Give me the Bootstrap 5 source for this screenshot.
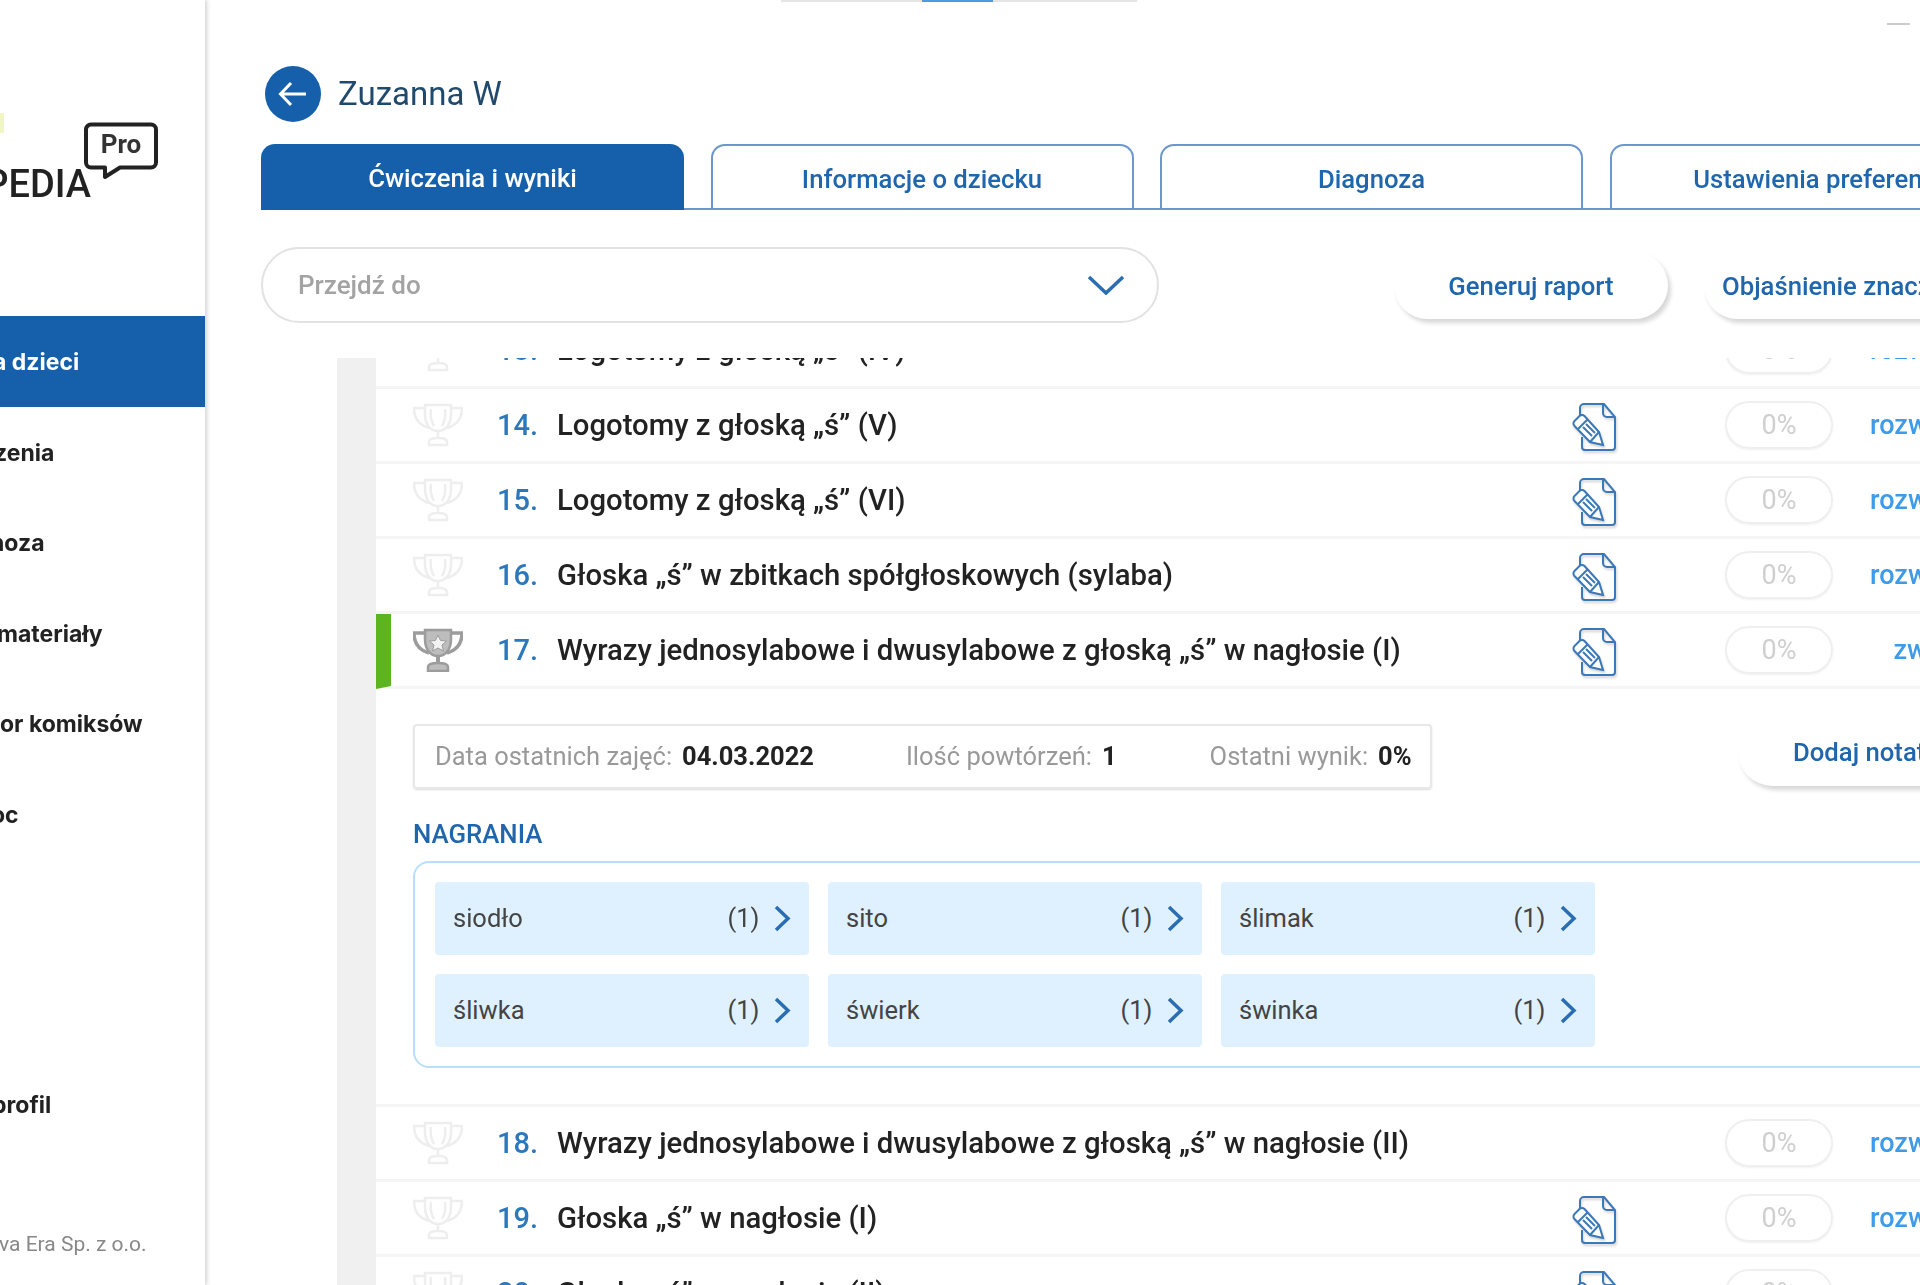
<!DOCTYPE html>
<html lang="pl">
<head>
<meta charset="utf-8">
<title>Zuzanna W</title>
<link href="https://cdn.jsdelivr.net/npm/bootstrap@5.3.0/dist/css/bootstrap.min.css" rel="stylesheet">
<style>
html,body{height:1285px;overflow:hidden;background:#fff}
body{font-family:Roboto,"Liberation Sans",sans-serif;color:#222}
.shell{height:1285px;width:1920px;overflow:hidden;filter:blur(.5px)}
.side{width:205px;flex:none;height:1285px;overflow:hidden;background:#fff;box-shadow:2px 0 4px #d4d4d4;position:relative;z-index:2}
.spark{position:absolute;left:0;top:113px;width:4px;height:20px;background:#f1f7c4}
.logo-box{height:316px;position:relative}
.logo-word{position:absolute;right:114px;top:164px;font-size:38px;line-height:40px;font-weight:500;white-space:nowrap;color:#222}
.logo-bubble{position:absolute;left:84px;top:122px;width:74px;height:58px}
.logo-pro{font:700 26px Roboto,sans-serif;fill:#333}
.navi a,.prof{font-family:Inter,Roboto,sans-serif;font-size:23px;font-weight:700;color:#222;white-space:nowrap}
.navi a{display:flex;align-items:center;height:90.500px;padding:2px 0 0 0;text-decoration:none}
.navi a.on{background:#1660ab;color:#fff}
.navi a.i1{text-indent:-7px}
.navi a.i2{text-indent:-6px}
.navi a.i3{text-indent:-10px}
.navi a.i4{text-indent:-3px}
.navi a.i6{text-indent:-9px}
.prof{margin-top:201px;height:90px;display:flex;align-items:center;text-indent:-8px}
.copy{font-size:21px;color:#888;margin-top:79px;white-space:nowrap;text-indent:-1px}
.work{width:1715px;flex:none;height:1285px;overflow:hidden}
.topbar{height:25px;padding-left:576px}
.strip{width:356px;height:2px;background:linear-gradient(90deg,#e5e5e5 0 141px,#4a9be0 141px 212px,#e5e5e5 212px)}
.dash{width:23px;height:2px;background:#ccc;margin:23px 0 0 750px}
.pane{padding-left:56px}
.head{margin-top:41px;gap:17px;height:56px;padding-left:4px}
.back{width:56px;height:56px;border-radius:50%;background:#1660ab;flex:none}
.who{font-size:33px;color:#1f4a6e;line-height:1;padding-bottom:2px}
.tabsrow{margin-top:22px;height:66px;gap:26.500px;border-bottom:2px solid #6b97cc;width:1800px}
.tabx{width:423px;flex:none;height:66px;border:2px solid #6b97cc;border-bottom:0;border-radius:14px 14px 0 0;display:flex;align-items:center;justify-content:center;padding-top:2px;font-size:25.700px;font-weight:500;color:#1f66ad;text-decoration:none;white-space:nowrap}
.tabx.on{background:#1660ab;border-color:#1660ab;color:#fff;padding-top:0}
.tools{margin-top:37px;height:76px}
.jump{width:898px;height:76px;flex:none;border:2px solid #e2e2e2;border-radius:38px;padding:0 32px 0 35px;color:#a3a3a3;font-size:26px;font-weight:500}
.pillbtn{flex:none;border-radius:40px;background:#fff;box-shadow:3px 4px 4px #d8d8d8;display:flex;align-items:center;justify-content:center;font-size:25.700px;font-weight:500;color:#1f66ad;text-decoration:none;white-space:nowrap;padding-top:2px}
.gen{width:274px;height:67px;margin-left:235px}
.expl{width:300px;height:67px;margin-left:36px;justify-content:flex-start;padding-left:18px}
.lst{margin:35px 0 0 76px;height:927px;overflow:hidden;border-left:39px solid #f0f0f0;width:1640px}
.rw{height:75px;border-bottom:3px solid #f5f5f5;padding-left:37px;align-items:center;display:flex;flex:none}
.rw.cut{margin-top:-44px}
.rw.cur{border-left:15px solid #5cb51e;padding-left:22px}
.trophy{width:50px;height:44px;flex:none;margin-right:34px}
.num{width:60px;flex:none;font-size:29px;font-weight:500;color:#2b78bd;padding-top:2px}
.ttl{width:1015px;flex:none;font-size:29.300px;font-weight:500;color:#222;white-space:nowrap;padding-top:2px}
.docc{width:153px;flex:none;display:flex;align-items:center;height:50px;margin-top:3px}
.docc svg{filter:drop-shadow(1px 2px 1px #d0d0d0)}
.pct{width:108px;height:48px;flex:none;border:2px solid #efefef;border-radius:24px;color:#cfcfcf;font-size:27px;display:flex;align-items:center;justify-content:center;box-shadow:0 1px 2px #f0f0f0}
.tog{width:79px;margin-left:37px;flex:none;text-align:right;font-size:27px;font-weight:500;color:#3d9be9;white-space:nowrap;text-decoration:none}
.more{padding:28px 0 36px 37px;border-bottom:3px solid #f5f5f5}
.infobox{width:1019px;height:65px;margin-top:7px;flex:none;border:2px solid #e8e8e8;border-radius:4px;box-shadow:0 1px 2px #ddd;padding-left:20px;font-size:25.500px;color:#999;white-space:nowrap}
.infobox b{color:#222;font-weight:700;margin-left:10px}
.infobox .it2{margin-left:92px}
.infobox .it3{margin-left:93px}
.note{width:320px;height:69px;margin-left:306px;justify-content:flex-start;padding-left:55px}
.nagr{margin-top:27px;font-size:25.800px;font-weight:500;color:#1f66ad;line-height:36px}
.recs{margin-top:9px;width:1560px;height:207px;border:2px solid #b9def8;border-radius:16px;padding:19px 20px;display:grid;grid-template-columns:repeat(3,373.500px);grid-auto-rows:73px;gap:19px 19.500px}
.tile{background:#dff1ff;border-radius:4px;padding:0 18px 0 18px;font-size:25.500px;color:#444;display:flex;align-items:center;text-decoration:none}
.tile span{margin-left:auto;margin-right:14px}
</style>
</head>
<body>
<svg width="0" height="0" style="position:absolute">
<defs>
<symbol id="cup" viewBox="0 0 50 44">
<path d="M12 2h26v9c0 10-5 17-13 17S12 21 12 11z M12 5H1c0 10 5 17 15 20 M38 5h11c0 10-5 17-15 20 M25 28v7 M16 42v-3c0-3 5-4 9-4s9 1 9 4v3z M18 6c-1 7 0 12 3 17 M32 6c1 7 0 12-3 17" fill="none"/>
</symbol>
<symbol id="cupfull" viewBox="0 0 50 44">
<path d="M12 2h26v9c0 10-5 17-13 17S12 21 12 11z" fill="#bdbdbd"/>
<path d="M12 5H1c0 10 5 17 15 20 M38 5h11c0 10-5 17-15 20" fill="none" stroke-width="3.500"/>
<path d="M25 28v7" fill="none" stroke-width="4"/>
<path d="M15 43v-4c0-3 5-4 10-4s10 1 10 4v4z" fill="#bdbdbd"/>
<path d="M25 7l2.500 5.500 6 .5-4.500 4 1.500 6-5.500-3-5.500 3 1.500-6-4.500-4 6-.5z" fill="#f2f2f2" stroke-width="1"/>
</symbol>
<symbol id="doc" viewBox="0 0 44 50">
<path d="M8 13V6a4 4 0 0 1 4-4h20l11 13v30a3 3 0 0 1-3 3H13a3 3 0 0 1-3-3V35" fill="none"/>
<path d="M31 2v9a4 4 0 0 0 4 4h8" fill="none"/>
<path d="M31 43l-13-3L2.500 24a3.500 3.500 0 0 1 0-5l5-5a3.500 3.500 0 0 1 5 0L27 30z" fill="#fff"/>
<path d="M6 27l10-10M18 40l9-10M11 25l9 9M14 22l9 9" fill="none"/>
</symbol>
</defs>
</svg>
<div class="shell d-flex">
<aside class="side">
<span class="spark"></span>
<div class="logo-box">
<div class="logo-word">LOGOPEDIA</div>
<svg class="logo-bubble" viewBox="0 0 74 58"><path d="M7 2.500h60a5 5 0 0 1 5 5v33a5 5 0 0 1-5 5H36L21 55v-9.500h-14a5 5 0 0 1-5-5V7.500a5 5 0 0 1 5-5z" fill="#fff" stroke="#222" stroke-width="4" stroke-linejoin="round"/><text x="37" y="31" text-anchor="middle" class="logo-pro">Pro</text></svg>
</div>
<nav class="navi">
<a class="on i1" href="#">a dzieci</a>
<a class="i2" href="#">zenia</a>
<a class="i3" href="#">noza</a>
<a class="i4" href="#">materiały</a>
<a href="#">or komiksów</a>
<a class="i6" href="#">oc</a>
</nav>
<div class="prof">profil</div>
<div class="copy">va Era Sp. z o.o.</div>
</aside>
<main class="work">
<div class="topbar d-flex"><div class="strip"></div><div class="dash"></div></div>
<div class="pane">
<div class="head d-flex align-items-center">
<a class="back d-flex align-items-center justify-content-center" href="#"><svg width="30" height="26" viewBox="0 0 30 26" fill="none" stroke="#fff" stroke-width="3"><path d="M28 13H3M13 2L2.500 13L13 24"/></svg></a>
<div class="who">Zuzanna W</div>
</div>
<div class="tabsrow d-flex">
<a class="tabx on" href="#">Ćwiczenia i wyniki</a>
<a class="tabx" href="#">Informacje o dziecku</a>
<a class="tabx" href="#">Diagnoza</a>
<a class="tabx" href="#">Ustawienia preferencji</a>
</div>
<div class="tools d-flex align-items-center">
<div class="jump d-flex align-items-center justify-content-between">Przejdź do
<svg width="38" height="20" viewBox="0 0 38 20" fill="none" stroke="#2a6db0" stroke-width="3.500"><path d="M2 2l17 16L36 2"/></svg></div>
<a class="pillbtn gen" href="#">Generuj raport</a>
<a class="pillbtn expl" href="#">Objaśnienie znaczków</a>
</div>
<div class="lst">
<div class="rw cut"><svg class="trophy" stroke="#eee" stroke-width="2.500"><use href="#cup"/></svg><div class="num">13.</div><div class="ttl">Logotomy z głoską „ś” (IV)</div><div class="docc"></div><div class="pct">0%</div><a class="tog" href="#">rozwiń</a></div>
<div class="rw"><svg class="trophy" stroke="#eee" stroke-width="2.500"><use href="#cup"/></svg><div class="num">14.</div><div class="ttl">Logotomy z głoską „ś” (V)</div><div class="docc"><svg width="44" height="50" stroke="#3b78b8" stroke-width="2"><use href="#doc"/></svg></div><div class="pct">0%</div><a class="tog" href="#">rozwiń</a></div>
<div class="rw"><svg class="trophy" stroke="#eee" stroke-width="2.500"><use href="#cup"/></svg><div class="num">15.</div><div class="ttl">Logotomy z głoską „ś” (VI)</div><div class="docc"><svg width="44" height="50" stroke="#3b78b8" stroke-width="2"><use href="#doc"/></svg></div><div class="pct">0%</div><a class="tog" href="#">rozwiń</a></div>
<div class="rw"><svg class="trophy" stroke="#eee" stroke-width="2.500"><use href="#cup"/></svg><div class="num">16.</div><div class="ttl">Głoska „ś” w zbitkach spółgłoskowych (sylaba)</div><div class="docc"><svg width="44" height="50" stroke="#3b78b8" stroke-width="2"><use href="#doc"/></svg></div><div class="pct">0%</div><a class="tog" href="#">rozwiń</a></div>
<div class="rw cur"><svg class="trophy" stroke="#9c9c9c" stroke-width="2.500"><use href="#cupfull"/></svg><div class="num">17.</div><div class="ttl">Wyrazy jednosylabowe i dwusylabowe z głoską „ś” w nagłosie (I)</div><div class="docc"><svg width="44" height="50" stroke="#3b78b8" stroke-width="2"><use href="#doc"/></svg></div><div class="pct">0%</div><a class="tog" href="#">zwiń</a></div>
<div class="more">
<div class="d-flex align-items-start">
<div class="infobox d-flex align-items-center">Data ostatnich zajęć:<b>04.03.2022</b><span class="it2">Ilość powtórzeń:</span><b>1</b><span class="it3">Ostatni wynik:</span><b>0%</b></div>
<a class="pillbtn note" href="#">Dodaj notatkę</a>
</div>
<div class="nagr">NAGRANIA</div>
<div class="recs">
<a class="tile" href="#">siodło<span>(1)</span><svg width="17" height="27" viewBox="0 0 17 27" fill="none" stroke="#2a6db0" stroke-width="3.500"><path d="M2 2l12 11.500L2 25"/></svg></a>
<a class="tile" href="#">sito<span>(1)</span><svg width="17" height="27" viewBox="0 0 17 27" fill="none" stroke="#2a6db0" stroke-width="3.500"><path d="M2 2l12 11.500L2 25"/></svg></a>
<a class="tile" href="#">ślimak<span>(1)</span><svg width="17" height="27" viewBox="0 0 17 27" fill="none" stroke="#2a6db0" stroke-width="3.500"><path d="M2 2l12 11.500L2 25"/></svg></a>
<a class="tile" href="#">śliwka<span>(1)</span><svg width="17" height="27" viewBox="0 0 17 27" fill="none" stroke="#2a6db0" stroke-width="3.500"><path d="M2 2l12 11.500L2 25"/></svg></a>
<a class="tile" href="#">świerk<span>(1)</span><svg width="17" height="27" viewBox="0 0 17 27" fill="none" stroke="#2a6db0" stroke-width="3.500"><path d="M2 2l12 11.500L2 25"/></svg></a>
<a class="tile" href="#">świnka<span>(1)</span><svg width="17" height="27" viewBox="0 0 17 27" fill="none" stroke="#2a6db0" stroke-width="3.500"><path d="M2 2l12 11.500L2 25"/></svg></a>
</div>
</div>
<div class="rw"><svg class="trophy" stroke="#eee" stroke-width="2.500"><use href="#cup"/></svg><div class="num">18.</div><div class="ttl">Wyrazy jednosylabowe i dwusylabowe z głoską „ś” w nagłosie (II)</div><div class="docc"></div><div class="pct">0%</div><a class="tog" href="#">rozwiń</a></div>
<div class="rw"><svg class="trophy" stroke="#eee" stroke-width="2.500"><use href="#cup"/></svg><div class="num">19.</div><div class="ttl">Głoska „ś” w nagłosie (I)</div><div class="docc"><svg width="44" height="50" stroke="#3b78b8" stroke-width="2"><use href="#doc"/></svg></div><div class="pct">0%</div><a class="tog" href="#">rozwiń</a></div>
<div class="rw"><svg class="trophy" stroke="#eee" stroke-width="2.500"><use href="#cup"/></svg><div class="num">20.</div><div class="ttl">Głoska „ś” w nagłosie (II)</div><div class="docc"><svg width="44" height="50" stroke="#3b78b8" stroke-width="2"><use href="#doc"/></svg></div><div class="pct">0%</div><a class="tog" href="#">rozwiń</a></div>
</div>
</div>
</main>
</div>
<script src="https://cdn.jsdelivr.net/npm/bootstrap@5.3.0/dist/js/bootstrap.bundle.min.js"></script>
</body>
</html>
